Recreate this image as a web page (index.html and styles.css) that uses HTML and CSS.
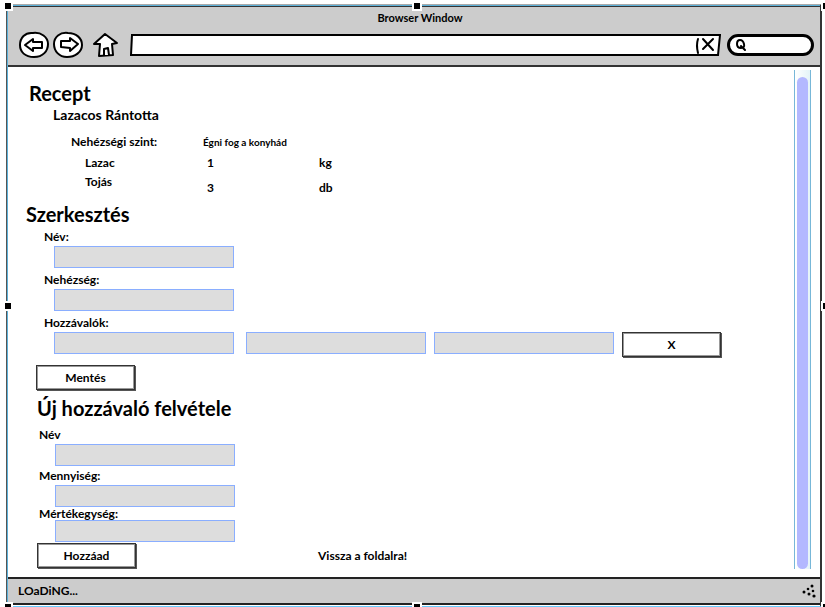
FILE: index.html
```html
<!DOCTYPE html>
<html lang="hu">
<head>
<meta charset="utf-8">
<title>Browser Window</title>
<link rel="stylesheet" href="styles.css">
</head>
<body>
<div class="window">
  <header class="chrome">
    <div class="title">Browser Window</div>
    <div class="toolbar">
      <button class="nav" type="button" aria-label="Back">
        <svg width="32" height="28" viewBox="0 0 32 28"><path class="ink" d="M15 2C7 1 2 7 2 14s5 12 14 12 14-6 14-13S23 1 15 2Z"/><path class="ink" d="M7 14l8-6 0 3 9 0 0 6-9 0 0 3Z"/></svg>
      </button>
      <button class="nav" type="button" aria-label="Forward">
        <svg width="32" height="28" viewBox="0 0 32 28"><path class="ink" d="M16 2C8 1 2 6 2 13s5 13 13 13 15-5 15-12S24 2 16 2Z"/><path class="ink" d="M26 13l-8-6 0 3-9 0 0 6 9 1 0 3Z"/></svg>
      </button>
      <button class="nav home" type="button" aria-label="Home">
        <svg width="28" height="26" viewBox="0 0 28 26"><path class="ink" d="M2 12L13 2l12 9-5 1 1 11-14 1 1-12Z"/><path class="ink" d="M12 23l0-6 4-1 1 7"/></svg>
      </button>
      <div class="address">
        <svg class="address-frame" viewBox="0 0 592 22" preserveAspectRatio="none"><path d="M2 1L591 1 589 21 1 21Z"/></svg>
        <input type="text" aria-label="Address">
        <button class="clear" type="button" aria-label="Clear">
          <svg width="22" height="20" viewBox="0 0 22 20"><path class="ink" d="M4 4q-2 6 0 14M9 4l10 11M19 4L9 14"/></svg>
        </button>
      </div>
      <div class="search">
        <svg width="12" height="14" viewBox="0 0 12 14"><path class="ink" d="M5 2q-3 0-3 4t4 4 3-4-4-4M6 8l4 4"/></svg>
        <input type="text" aria-label="Search">
      </div>
    </div>
  </header>

  <div class="body">
    <main>
      <section class="recipe">
        <h2>Recept</h2>
        <p class="name">Lazacos Rántotta</p>
        <table>
          <tr><th class="level" scope="row">Nehézségi szint:</th><td class="small" colspan="2">Égni fog a konyhád</td></tr>
          <tr><th scope="row">Lazac</th><td>1</td><td class="unit">kg</td></tr>
          <tr class="last"><th scope="row">Tojás</th><td>3</td><td class="unit">db</td></tr>
        </table>
      </section>

      <form class="edit">
        <h2>Szerkesztés</h2>
        <div class="field"><label for="name">Név:</label><input id="name" type="text"></div>
        <div class="field"><label for="level">Nehézség:</label><input id="level" type="text"></div>
        <div class="field">
          <label for="item">Hozzávalók:</label>
          <div class="ingredients">
            <input id="item" type="text">
            <input type="text" aria-label="Mennyiség">
            <input type="text" aria-label="Mértékegység">
            <button class="btn" type="button">X</button>
          </div>
        </div>
        <button class="btn save" type="button">Mentés</button>
      </form>

      <form class="add">
        <h2>Új hozzávaló felvétele</h2>
        <div class="field"><label for="new-name">Név</label><input id="new-name" type="text"></div>
        <div class="field"><label for="amount">Mennyiség:</label><input id="amount" type="text"></div>
        <div class="field tight"><label for="measure">Mértékegység:</label><input id="measure" type="text"></div>
        <div class="actions">
          <button class="btn" type="button">Hozzáad</button>
          <a href="#">Vissza a foldalra!</a>
        </div>
      </form>
    </main>
    <div class="scroll"><div class="thumb"></div></div>
  </div>

  <footer class="status">
    <span>LOaDiNG...</span>
    <svg width="16" height="16" viewBox="0 0 16 16"><circle cx="11" cy="3" r="1.5"/><circle cx="7" cy="6" r="1.3"/><circle cx="12" cy="8" r="1.3"/><circle cx="3" cy="9" r="1.5"/><circle cx="8" cy="11" r="1.5"/><circle cx="13" cy="13" r="1.6"/></svg>
  </footer>

  <i class="handle left top"></i><i class="handle center top"></i><i class="handle right top"></i>
  <i class="handle left middle"></i><i class="handle right middle"></i>
  <i class="handle left bottom"></i><i class="handle center bottom"></i><i class="handle right bottom"></i>
</div>
</body>
</html>
```
FILE: styles.css
```css
* { box-sizing: border-box; }

body {
  margin: 0;
  min-height: 100vh;
  display: flex;
  background: #fff;
  color: #000;
  font: bold 12px/18px Lato, "Open Sans", sans-serif;
  overflow: hidden;
}

input, button { font: inherit; color: inherit; }
button { padding: 0; background: none; border: 0; }
h2, p { margin: 0; }
svg { display: block; }
.ink { fill: #fff; stroke: #000; stroke-width: 2; stroke-linejoin: round; stroke-linecap: round; }

.window {
  position: relative;
  flex: 1;
  display: flex;
  flex-direction: column;
  margin: 4px 3px 2px 6px;
  border: 2px solid #333;
  border-left: 1px solid #555;
  border-top: 1px solid #aaa;
  border-bottom: 1px solid #6cf;
  box-shadow: inset 1px 1px #5bb0d8;
}

.chrome {
  margin: 1px 0 0 1px;
  border-top: 1px solid #333;
  border-bottom: 2px solid #333;
  background: #ccc;
}
.title { padding: 2px 0 0 12px; text-align: center; font-size: 11px; }
.toolbar {
  display: flex;
  align-items: center;
  height: 38px;
  padding: 0 6px 2px 10px;
}
.nav { margin-right: 2px; }
.home { margin: 0 10px 0 6px; }
.address { position: relative; flex: 1; display: flex; height: 22px; }
.address-frame { position: absolute; inset: 0; width: 100%; height: 100%; }
.address-frame path { fill: #fff; stroke: #000; stroke-width: 2; vector-effect: non-scaling-stroke; }
.address input { position: relative; flex: 1; min-width: 0; margin: 3px; border: 0; background: none; }
.clear { position: relative; margin-right: 5px; }
.clear .ink, .search .ink { fill: none; }
.search {
  display: flex;
  align-items: center;
  width: 87px;
  height: 22px;
  margin-left: 6px;
  padding-left: 5px;
  border: 3px solid #000;
  border-radius: 11px;
  background: #fff;
}
.search input { width: 55px; height: 14px; border: 0; }

.body { flex: 1; display: flex; padding-right: 9px; }
main { flex: 1; padding: 12px 0 9px 18px; }
h2 { font-size: 20px; line-height: 28px; }

.recipe { padding-left: 4px; }
.name { padding-left: 24px; font-size: 14px; line-height: 16px; }
table { margin: 8px 0 3px 42px; border-collapse: collapse; }
th, td { height: 20px; padding: 0; font-weight: bold; text-align: left; line-height: 18px; }
th { width: 132px; padding-left: 14px; }
td { width: 113px; padding-left: 4px; }
.level { height: 22px; padding-left: 0; }
.small { padding-left: 0; font-size: 10px; }
.unit { padding-left: 3px; }
.last th { height: 24px; vertical-align: top; }
.last td { vertical-align: bottom; }

.edit { padding-left: 1px; }
.field { display: flex; flex-direction: column; align-items: flex-start; margin-bottom: 3px; }
.field label { padding-left: 18px; }
.field input {
  width: 180px;
  height: 22px;
  margin-left: 28px;
  border: 1px solid #8aaeff;
  background: #ddd;
}
.ingredients { display: flex; gap: 8px; padding-left: 28px; height: 22px; }
.ingredients input { margin: 0; }
.ingredients input:first-child { margin-right: 4px; }
.btn {
  width: 99px;
  height: 25px;
  border: 1px solid #333;
  background: #fff;
  box-shadow: inset 0 0 0 1px #999, 1px 1px #555;
}
.save { margin: 8px 0 4px 10px; }

.add { padding-left: 12px; }
.add .field { margin-bottom: 1px; }
.add .field label { padding-left: 2px; }
.add .field input { margin-left: 18px; }
.add h2 { margin-bottom: 4px; }
.tight label { line-height: 12px; }
.actions { display: flex; align-items: center; gap: 182px; }
.actions a { color: inherit; text-decoration: none; }

.scroll {
  width: 17px;
  margin: 3px 0 8px;
  padding: 7px 2px 0;
  border: solid #77b7d8;
  border-width: 0 1px;
  background: linear-gradient(90deg, #fff, #e4f4f8);
}
.thumb { width: 11px; height: 100%; border-radius: 6px; background: #b3b8ff; }

.status {
  display: flex;
  align-items: center;
  justify-content: space-between;
  height: 28px;
  margin: 0 0 1px 1px;
  padding: 0 3px 0 10px;
  border-top: 2px solid #222;
  border-bottom: 2px solid #222;
  background: #ccc;
}

.handle { position: absolute; width: 10px; height: 10px; border: 2px solid #fff; background: #000; }
.left { left: -4px; }
.center { left: calc(50% - 2px); }
.right { right: -11px; }
.top { top: -4px; }
.middle { top: calc(50% - 5px); }
.bottom { bottom: -6px; }
```
